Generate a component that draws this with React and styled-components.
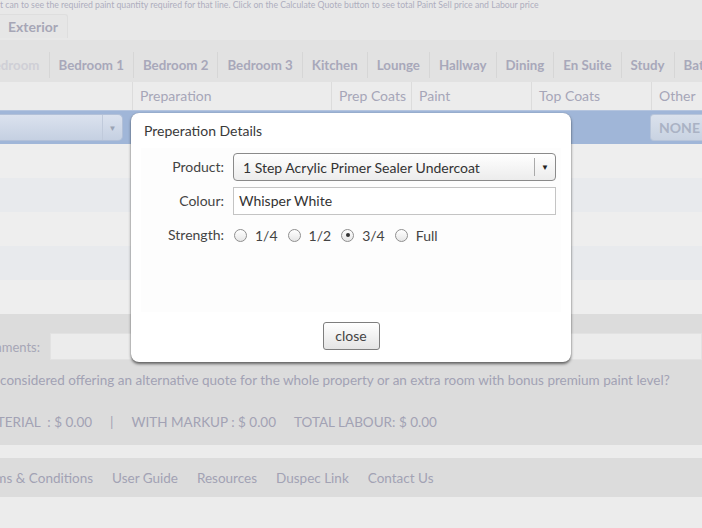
import React from "react";
import styled, { createGlobalStyle } from "styled-components";

const GlobalStyle = createGlobalStyle`
  html, body { margin: 0; padding: 0; background: #ececec; }
  body { font-family: Lato, "Liberation Sans", sans-serif; overflow: hidden; }
  * { box-sizing: border-box; }
`;

const Page = styled.div`
  position: relative;
  width: 702px;
  height: 528px;
  overflow: hidden;
  display: flex;
  flex-direction: column;
  background: #ececec;
  color: #a2a2b4;
`;

const TopArea = styled.div`
  background: #e8e8e8;
  height: 40px;
  display: flex;
  flex-direction: column;
`;

const TopNote = styled.div`
  font-size: 8.7px;
  line-height: 10px;
  height: 12px;
  color: #aeaebe;
  white-space: nowrap;
`;

const ExteriorTab = styled.div`
  margin-top: 2px;
  width: 68px;
  height: 24px;
  border: 1px solid #dedede;
  border-left: none;
  border-bottom: none;
  border-radius: 0 3px 0 0;
  background: #e6e6e6;
  font-size: 14px;
  font-weight: 700;
  color: #a6a6b6;
  padding-left: 8px;
  line-height: 23px;
`;

const TabBar = styled.div`
  height: 42px;
  background: #e2e2e2;
  display: flex;
  align-items: center;
  padding-top: 8px;
  white-space: nowrap;
`;

const Tab = styled.div`
  font-size: 13.3px;
  font-weight: 700;
  color: ${(p) => (p.$faded ? "#cfcfd6" : "#a8a8ba")};
  padding: 0 9px;
  height: 26px;
  line-height: 26px;
  border-left: ${(p) => (p.$first ? "none" : "1px solid #d6d6d6")};
  margin-left: ${(p) => p.$shift || 0}px;
  flex-shrink: 0;
`;

const HeaderRow = styled.div`
  height: 28px;
  background: #ececec;
  display: grid;
  grid-template-columns: 132px 199px 80px 120px 120px 1fr;
`;

const HeadCell = styled.div`
  font-size: 14px;
  color: #a6a6b8;
  line-height: 28px;
  padding-left: 7px;
  border-left: ${(p) => (p.$first ? "none" : "1px solid #dcdcdc")};
  white-space: nowrap;
  overflow: hidden;
`;

const BlueRow = styled.div`
  height: 34px;
  background: #a0b6d8;
  border-top: 1px solid #b4c4de;
  display: flex;
  align-items: center;
  justify-content: space-between;
`;

const RowSelect = styled.div`
  width: 123px;
  height: 27px;
  border-radius: 0 5px 5px 0;
  background: linear-gradient(#dbe2ee, #c5d0e2);
  border: 1px solid #b2c0d8;
  border-left: none;
  display: flex;
  justify-content: flex-end;
  align-items: center;
`;

const SelectArrow = styled.div`
  width: 20px;
  height: 100%;
  border-left: 1px solid #c0cadb;
  display: flex;
  align-items: center;
  justify-content: center;
  font-size: 8px;
  color: #9aa3b4;
`;

const NoneButton = styled.div`
  width: 52px;
  height: 27px;
  border-radius: 4px 0 0 4px;
  background: linear-gradient(#dae1ec, #c9d3e2);
  border: 1px solid #b8c5da;
  border-right: none;
  font-size: 14px;
  font-weight: 700;
  color: #aab2c4;
  line-height: 25px;
  padding-left: 8px;
`;

const Stripe = styled.div`
  height: 34px;
  background: ${(p) => (p.$alt ? "#e8eaed" : "#eeeeee")};
`;

const GrayArea = styled.div`
  background: #dcdcdc;
  height: 131px;
  display: flex;
  flex-direction: column;
  padding-top: 19px;
`;

const CommentsRow = styled.div`
  display: flex;
  align-items: center;
  height: 27px;
`;

const CommentsLabel = styled.div`
  width: 50px;
  flex-shrink: 0;
  font-size: 13px;
  color: #a6a6b6;
  white-space: nowrap;
  overflow: hidden;
  display: flex;
  justify-content: flex-end;
  padding-right: 10px;
`;

const CommentsInput = styled.div`
  flex: 1;
  height: 27px;
  background: #ececec;
  border: 1px solid #e2e2e2;
`;

const ClipText = styled.div`
  font-size: 13.5px;
  color: #a2a2b4;
  white-space: nowrap;
  line-height: 18px;
`;

const Question = styled(ClipText)`
  margin-top: 11px;
  margin-left: -59px;
`;

const Totals = styled(ClipText)`
  margin-top: 24px;
  display: flex;
  gap: 18px;
  margin-left: -24px;
`;

const LightBand = styled.div`
  height: 13px;
  background: #ececec;
`;

const Footer = styled.div`
  height: 39px;
  background: #dcdcdc;
  display: flex;
  align-items: center;
  gap: 19px;
  white-space: nowrap;
  margin-left: -23px;
`;

const FooterLink = styled.div`
  font-size: 13.5px;
  color: #a2a2b4;
`;

/* ------- dialog ------- */
const Dialog = styled.div`
  position: absolute;
  left: 131px;
  top: 113px;
  width: 440px;
  height: 249px;
  background: #ffffff;
  border-radius: 8px;
  box-shadow: 0 2px 3px rgba(0, 0, 0, 0.55), 0 0 1px rgba(0, 0, 0, 0.3);
  display: flex;
  flex-direction: column;
  padding: 0 10px;
  font-family: Lato, "Liberation Sans", sans-serif;
  color: #333;
`;

const DialogTitle = styled.div`
  height: 35px;
  font-size: 14px;
  line-height: 36px;
  padding-left: 3px;
  color: #3a3a3a;
`;

const DialogBody = styled.div`
  height: 164px;
  background: #fdfdfd;
  padding-top: 5px;
  display: grid;
  grid-template-columns: 83px 323px;
  column-gap: 9px;
  row-gap: 6px;
  align-content: start;
`;

const FieldLabel = styled.div`
  text-align: right;
  font-size: 14px;
  color: #444;
  line-height: 28px;
`;

const ProductSelect = styled.div`
  height: 28px;
  border: 1px solid #8a8a8a;
  border-radius: 4px;
  background: linear-gradient(#ffffff, #ececec);
  display: flex;
  align-items: center;
  font-size: 14px;
  color: #333;
`;

const SelectText = styled.div`
  flex: 1;
  padding-left: 9px;
  white-space: nowrap;
`;

const SelectButton = styled.div`
  width: 21px;
  height: 18px;
  border-left: 1px solid #aaa;
  display: flex;
  align-items: center;
  justify-content: center;
  font-size: 8px;
  color: #222;
`;

const TextInput = styled.div`
  height: 28px;
  border: 1px solid #c4c4c4;
  background: #fff;
  font-size: 14px;
  line-height: 26px;
  padding-left: 5px;
  color: #333;
`;

const RadioGroup = styled.div`
  display: flex;
  align-items: center;
  height: 28px;
  padding-left: 1px;
`;

const RadioItem = styled.label`
  display: flex;
  align-items: center;
  font-size: 14px;
  color: #444;
  margin-right: 10px;
`;

const RadioCircle = styled.span`
  width: 13px;
  height: 13px;
  border-radius: 50%;
  border: 1px solid #8f8f8f;
  background: linear-gradient(#ffffff, #e6e6e6);
  margin-right: 8px;
  display: flex;
  align-items: center;
  justify-content: center;
  &::after {
    content: "";
    width: 4px;
    height: 4px;
    border-radius: 50%;
    background: ${(p) => (p.$checked ? "#333" : "transparent")};
  }
`;

const DialogFooter = styled.div`
  flex: 1;
  display: flex;
  align-items: center;
  justify-content: center;
  padding-bottom: 2px;
`;

const CloseButton = styled.div`
  width: 57px;
  height: 28px;
  border: 1px solid #7e7e7e;
  border-radius: 3px;
  background: linear-gradient(#ffffff, #e4e4e4);
  font-size: 14px;
  color: #444;
  text-align: center;
  line-height: 26px;
`;

const tabs = ["Bedroom 1", "Bedroom 2", "Bedroom 3", "Kitchen", "Lounge", "Hallway", "Dining", "En Suite", "Study", "Bathroom"];

export default function App() {
  return (
    <>
      <GlobalStyle />
      <Page>
        <TopArea>
          <TopNote>t can to see the required paint quantity required for that line. Click on the Calculate Quote button to see total Paint Sell price and Labour price</TopNote>
          <ExteriorTab>Exterior</ExteriorTab>
        </TopArea>
        <TabBar>
          <Tab $first $faded $shift={-24}>Bedroom</Tab>
          {tabs.map((t) => (
            <Tab key={t}>{t}</Tab>
          ))}
        </TabBar>
        <HeaderRow>
          <HeadCell $first></HeadCell>
          <HeadCell>Preparation</HeadCell>
          <HeadCell>Prep Coats</HeadCell>
          <HeadCell>Paint</HeadCell>
          <HeadCell>Top Coats</HeadCell>
          <HeadCell>Other</HeadCell>
        </HeaderRow>
        <BlueRow>
          <RowSelect>
            <SelectArrow>▼</SelectArrow>
          </RowSelect>
          <NoneButton>NONE</NoneButton>
        </BlueRow>
        <Stripe />
        <Stripe $alt />
        <Stripe />
        <Stripe $alt />
        <Stripe />
        <GrayArea>
          <CommentsRow>
            <CommentsLabel>Comments:</CommentsLabel>
            <CommentsInput />
          </CommentsRow>
          <Question>Have you considered offering an alternative quote for the whole property or an extra room with bonus premium paint level?</Question>
          <Totals>
            <span>MATERIAL &nbsp;: $ 0.00</span>
            <span>|</span>
            <span>WITH MARKUP : $ 0.00</span>
            <span>TOTAL LABOUR: $ 0.00</span>
          </Totals>
        </GrayArea>
        <LightBand />
        <Footer>
          <FooterLink>Terms &amp; Conditions</FooterLink>
          <FooterLink>User Guide</FooterLink>
          <FooterLink>Resources</FooterLink>
          <FooterLink>Duspec Link</FooterLink>
          <FooterLink>Contact Us</FooterLink>
        </Footer>

        <Dialog>
          <DialogTitle>Preperation Details</DialogTitle>
          <DialogBody>
            <FieldLabel>Product:</FieldLabel>
            <ProductSelect>
              <SelectText>1 Step Acrylic Primer Sealer Undercoat</SelectText>
              <SelectButton>▼</SelectButton>
            </ProductSelect>
            <FieldLabel>Colour:</FieldLabel>
            <TextInput>Whisper White</TextInput>
            <FieldLabel>Strength:</FieldLabel>
            <RadioGroup>
              <RadioItem><RadioCircle />1/4</RadioItem>
              <RadioItem><RadioCircle />1/2</RadioItem>
              <RadioItem><RadioCircle $checked />3/4</RadioItem>
              <RadioItem><RadioCircle />Full</RadioItem>
            </RadioGroup>
          </DialogBody>
          <DialogFooter>
            <CloseButton>close</CloseButton>
          </DialogFooter>
        </Dialog>
      </Page>
    </>
  );
}
